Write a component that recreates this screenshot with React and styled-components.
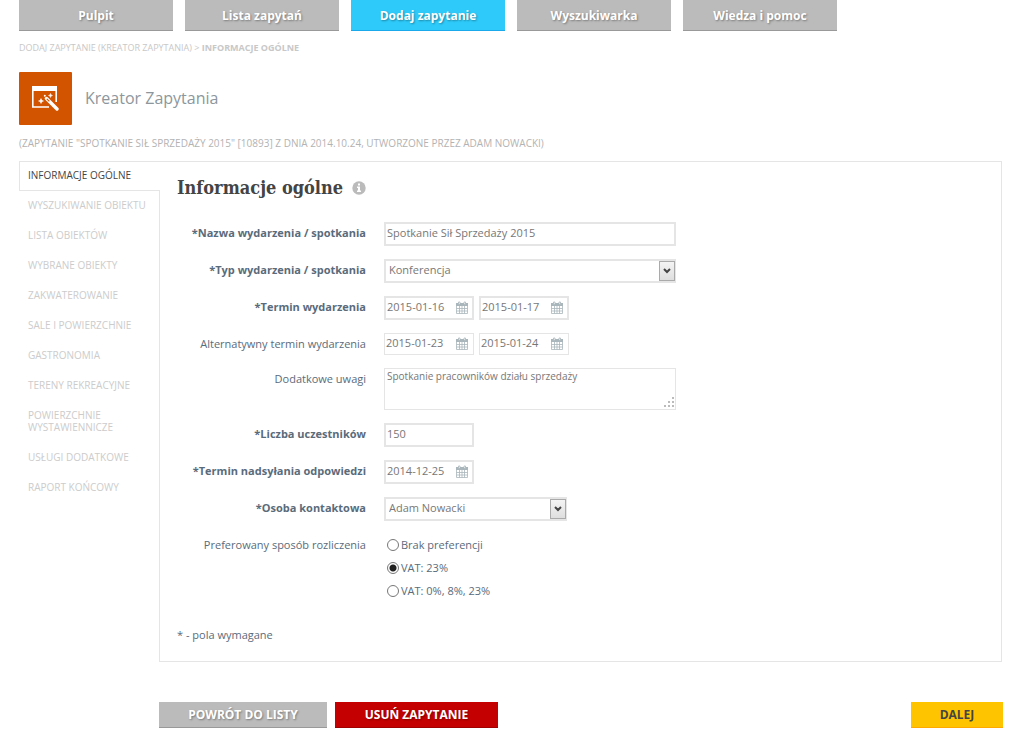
import React from "react";
import styled, { createGlobalStyle, css } from "styled-components";

const Global = createGlobalStyle`
  *, *::before, *::after { box-sizing: border-box; }
  body {
    margin: 0;
    background: #fff;
    color: #5a6b7b;
    font: 11px/16px "Open Sans", "Noto Sans", sans-serif;
  }
  button, input, select, textarea { font: inherit; color: inherit; }
`;

const Page = styled.div`
  padding: 0 22px 15px 19px;
`;

const TopNav = styled.nav`
  display: flex;
  gap: 12px;
`;

const Tab = styled.a`
  flex: 0 1 154px;
  height: 31px;
  padding-top: 6px;
  border-bottom: 1px solid ${(p) => (p.$active ? "#1aa9ea" : "#999")};
  background: ${(p) => (p.$active ? "#2ecbfa" : "#bbb")};
  color: #fff;
  font-size: 12px;
  line-height: 19px;
  font-weight: 700;
  text-align: center;
  text-decoration: none;
  text-shadow: 1px 1px 2px rgba(0, 0, 0, 0.35);
`;

const Breadcrumb = styled.div`
  margin-top: 9px;
  color: #c8c8c8;
  font-size: 9px;
  line-height: 16px;
  text-transform: uppercase;
`;

const Title = styled.header`
  display: flex;
  align-items: center;
  gap: 13px;
  margin-top: 16px;
`;

const Tile = styled.div`
  display: grid;
  place-items: center;
  width: 53px;
  height: 53px;
  border-radius: 1px;
  background: #d35400;
`;

const TitleText = styled.h1`
  margin: 0;
  padding-bottom: 2px;
  color: #8c979d;
  font-size: 16px;
  line-height: 24px;
  font-weight: 400;
`;

const Subtitle = styled.p`
  margin: 10px 0 10px;
  color: #b3b3b3;
  font-size: 10px;
  line-height: 16px;
  text-transform: uppercase;
`;

const Body = styled.div`
  display: flex;
`;

const Side = styled.nav`
  flex: 0 0 140px;
`;

const SideLink = styled.a`
  display: block;
  padding: 8px 8px 10px 9px;
  color: #ccc;
  font-size: 10px;
  line-height: 12px;
  text-decoration: none;
  text-transform: uppercase;
  ${(p) =>
    p.$active &&
    css`
      position: relative;
      margin-right: -1px;
      padding: 7px 8px 9px;
      border: 1px solid #e5e5e5;
      border-right: 0;
      background: #fff;
      color: #444;
    `}
`;

const Panel = styled.form`
  flex: 1;
  min-width: 0;
  padding: 13px 17px 18px;
  border: 1px solid #e5e5e5;
`;

const Heading = styled.h2`
  display: flex;
  align-items: center;
  gap: 9px;
  margin: 0 0 21px;
  color: #444;
  font: 700 18px/26px "DejaVu Serif Condensed", "DejaVu Serif", serif;
`;

const Fields = styled.div`
  display: grid;
  gap: 13px;
`;

const Row = styled.div`
  display: grid;
  grid-template-columns: 189px minmax(0, 292px);
  column-gap: 18px;
  align-items: start;
`;

const Label = styled.label`
  line-height: 22px;
  text-align: right;
  font-weight: ${(p) => (p.$required ? 700 : 400)};
`;

const Controls = styled.div`
  display: flex;
  gap: 5px;
`;

const box = css`
  width: 100%;
  border: ${(p) => (p.$required ? 2 : 1)}px solid #e5e5e5;
  border-radius: 0;
  background: #fff;
  color: #777;
  outline: 0;
`;

const TextBox = styled.input`
  ${box}
  width: ${(p) => (p.$short ? "90px" : "100%")};
  height: ${(p) => (p.$required ? 24 : 22)}px;
  padding: 0 1px 3px;
`;

const DateWrap = styled.div`
  position: relative;
  width: 90px;
`;

const CalendarButton = styled.button`
  position: absolute;
  top: 0;
  right: 5px;
  bottom: 0;
  display: flex;
  align-items: center;
  padding: 0;
  border: 0;
  background: none;
`;

const SelectWrap = styled.div`
  position: relative;
  width: ${(p) => (p.$short ? "183px" : "100%")};
`;

const Select = styled.select`
  ${box}
  display: block;
  height: 24px;
  padding: 0 20px 2px 3px;
  appearance: none;
`;

const SelectArrow = styled.span`
  position: absolute;
  top: 2px;
  right: 1px;
  bottom: 2px;
  display: grid;
  place-items: center;
  width: 16px;
  border: 1px solid #aaa;
  background: linear-gradient(#f4f4f4, #dedede);
  pointer-events: none;
`;

const AreaWrap = styled.div`
  position: relative;
`;

const Area = styled.textarea`
  ${box}
  display: block;
  height: 42px;
  padding: 0 2px;
  font-size: 10px;
  line-height: 14px;
  resize: none;
`;

const Grip = styled.svg`
  position: absolute;
  right: 1px;
  bottom: 2px;
`;

const Radios = styled.div`
  display: grid;
  gap: 7px;
  padding: 3px 0 0 3px;
`;

const RadioLabel = styled.label`
  display: flex;
  align-items: center;
  gap: 2px;
`;

const Radio = styled.input`
  appearance: none;
  width: 12px;
  height: 12px;
  margin: 0;
  border: 1px solid #777;
  border-radius: 50%;
  background: #fff;
  &:checked {
    background: radial-gradient(circle, #222 3px, #fff 4px);
  }
`;

const Note = styled.p`
  margin: 28px 0 0;
`;

const Footer = styled.footer`
  display: flex;
  gap: 8px;
  margin: 40px -1px 0 140px;
`;

const tones = {
  grey: ["#bbb", "#999", "#fff"],
  red: ["#c50000", "#a00000", "#fff"],
  yellow: ["#ffc400", "#ffa800", "#444"],
};

const Action = styled.button`
  flex: 0 1 ${(p) => p.$basis}px;
  height: 26px;
  margin-left: ${(p) => (p.$end ? "auto" : 0)};
  padding: 0;
  border: 0;
  border-bottom: 1px solid ${(p) => tones[p.$tone][1]};
  background: ${(p) => tones[p.$tone][0]};
  color: ${(p) => tones[p.$tone][2]};
  font-size: 12px;
  font-weight: 700;
  text-transform: uppercase;
  text-shadow: ${(p) => (p.$tone === "yellow" ? "none" : "1px 1px 2px rgba(0, 0, 0, 0.35)")};
`;

const WizardIcon = () => (
  <svg width="27" height="25" viewBox="0 0 27 25" aria-hidden="true">
    <path d="M.8 4v17H17M24.200 4v12" fill="none" stroke="#fff" strokeWidth="1.600" />
    <path d="M0 0h25v5H0z" fill="#fff" />
    <path d="M14.500 12.500l10.500 10.500" stroke="#fff" strokeWidth="3.400" strokeLinecap="round" />
    <path d="M14.800 12.800l2.600 2.600" stroke="#d35400" strokeWidth="1.200" />
    <path d="M9 12.500l.8 1.700 1.700.8-1.700.8L9 17.500l-.8-1.700-1.700-.8 1.700-.8zM18.500 7.500l.6 1.400 1.400.6-1.400.6-.6 1.400-.6-1.400-1.400-.6 1.400-.6z" fill="#fff" stroke="#fff" strokeWidth=".5" />
    <circle cx="12.800" cy="9.800" r="1" fill="#fff" />
  </svg>
);

const InfoIcon = () => (
  <svg width="14" height="14" viewBox="0 0 14 14" role="img" aria-label="Pomoc">
    <circle cx="7" cy="7" r="6.700" fill="#bbb" />
    <path d="M6 2.500h2v2H6zM5 5.500h3v4h1v1.500H5V9.500h1V7H5z" fill="#fff" />
  </svg>
);

const CalendarIcon = () => (
  <svg width="13" height="15" viewBox="0 0 13 15" aria-hidden="true">
    <path d="M.5 4.500h11v8H.5zM.5 7.500h11M.5 10h11M3.500 5v7.500M6 5v7.500M8.500 5v7.500" fill="none" stroke="#a9b6bb" strokeWidth=".8" />
    <path d="M0 2h12v3H0z" fill="#a9b6bb" />
    <path d="M2.500 1h1.500v2.500H2.500zM8 1h1.500v2.500H8z" fill="#fff" stroke="#a9b6bb" strokeWidth=".8" />
  </svg>
);

const DateBox = ({ id, value, label, required }) => (
  <DateWrap>
    <TextBox id={id} aria-label={label} defaultValue={value} $required={required} />
    <CalendarButton type="button" aria-label="Wybierz datę">
      <CalendarIcon />
    </CalendarButton>
  </DateWrap>
);

const DropDown = ({ id, value, short }) => (
  <SelectWrap $short={short}>
    <Select id={id} $required>
      <option>{value}</option>
    </Select>
    <SelectArrow>
      <svg width="8" height="6" viewBox="0 0 8 6" aria-hidden="true">
        <path d="M1 1l3 3 3-3" fill="none" stroke="#444" strokeWidth="2" />
      </svg>
    </SelectArrow>
  </SelectWrap>
);

const Field = ({ id, label, required, children }) => (
  <Row>
    <Label htmlFor={id} $required={required}>
      {required && "*"}
      {label}
    </Label>
    <Controls>{children}</Controls>
  </Row>
);

const tabs = ["Pulpit", "Lista zapytań", "Dodaj zapytanie", "Wyszukiwarka", "Wiedza i pomoc"];
const steps = [
  "Informacje ogólne",
  "Wyszukiwanie obiektu",
  "Lista obiektów",
  "Wybrane obiekty",
  "Zakwaterowanie",
  "Sale i powierzchnie",
  "Gastronomia",
  "Tereny rekreacyjne",
  "Powierzchnie wystawiennicze",
  "Usługi dodatkowe",
  "Raport końcowy",
];
const settlements = ["Brak preferencji", "VAT: 23%", "VAT: 0%, 8%, 23%"];

export default function App() {
  return (
    <Page>
      <Global />
      <TopNav>
        {tabs.map((t, i) => (
          <Tab key={t} href="#" $active={i === 2}>
            {t}
          </Tab>
        ))}
      </TopNav>
      <Breadcrumb>
        Dodaj zapytanie (kreator zapytania) &gt; <b>Informacje ogólne</b>
      </Breadcrumb>
      <Title>
        <Tile>
          <WizardIcon />
        </Tile>
        <TitleText>Kreator Zapytania</TitleText>
      </Title>
      <Subtitle>
        (Zapytanie "Spotkanie Sił Sprzedaży 2015" [10893] z dnia 2014.10.24, utworzone przez Adam Nowacki)
      </Subtitle>
      <Body>
        <Side>
          {steps.map((s, i) => (
            <SideLink key={s} href="#" $active={i === 0}>
              {s}
            </SideLink>
          ))}
        </Side>
        <Panel>
          <Heading>
            Informacje ogólne <InfoIcon />
          </Heading>
          <Fields>
            <Field id="name" label="Nazwa wydarzenia / spotkania" required>
              <TextBox id="name" defaultValue="Spotkanie Sił Sprzedaży 2015" $required />
            </Field>
            <Field id="type" label="Typ wydarzenia / spotkania" required>
              <DropDown id="type" value="Konferencja" />
            </Field>
            <Field id="from" label="Termin wydarzenia" required>
              <DateBox id="from" value="2015-01-16" required />
              <DateBox label="Termin wydarzenia do" value="2015-01-17" required />
            </Field>
            <Field id="altFrom" label="Alternatywny termin wydarzenia">
              <DateBox id="altFrom" value="2015-01-23" />
              <DateBox label="Alternatywny termin do" value="2015-01-24" />
            </Field>
            <Row>
              <Label htmlFor="notes">Dodatkowe uwagi</Label>
              <AreaWrap>
                <Area id="notes" defaultValue="Spotkanie pracowników działu sprzedaży" />
                <Grip width="11" height="11" viewBox="0 0 11 11" aria-hidden="true">
                  <path d="M8 0h2v2H8zM4 4h2v2H4zM8 4h2v2H8zM0 8h2v2H0zM4 8h2v2H4zM8 8h2v2H8z" fill="#bbb" />
                </Grip>
              </AreaWrap>
            </Row>
            <Field id="count" label="Liczba uczestników" required>
              <TextBox id="count" defaultValue="150" $required $short />
            </Field>
            <Field id="deadline" label="Termin nadsyłania odpowiedzi" required>
              <DateBox id="deadline" value="2014-12-25" required />
            </Field>
            <Field id="contact" label="Osoba kontaktowa" required>
              <DropDown id="contact" value="Adam Nowacki" short />
            </Field>
            <Row role="radiogroup" aria-labelledby="settlement">
              <Label as="span" id="settlement">
                Preferowany sposób rozliczenia
              </Label>
              <Radios>
                {settlements.map((s, i) => (
                  <RadioLabel key={s}>
                    <Radio type="radio" name="settlement" defaultChecked={i === 1} />
                    {s}
                  </RadioLabel>
                ))}
              </Radios>
            </Row>
          </Fields>
          <Note>* - pola wymagane</Note>
        </Panel>
      </Body>
      <Footer>
        <Action $tone="grey" $basis={168}>Powrót do listy</Action>
        <Action $tone="red" $basis={163}>Usuń zapytanie</Action>
        <Action $tone="yellow" $basis={92} $end>Dalej</Action>
      </Footer>
    </Page>
  );
}
